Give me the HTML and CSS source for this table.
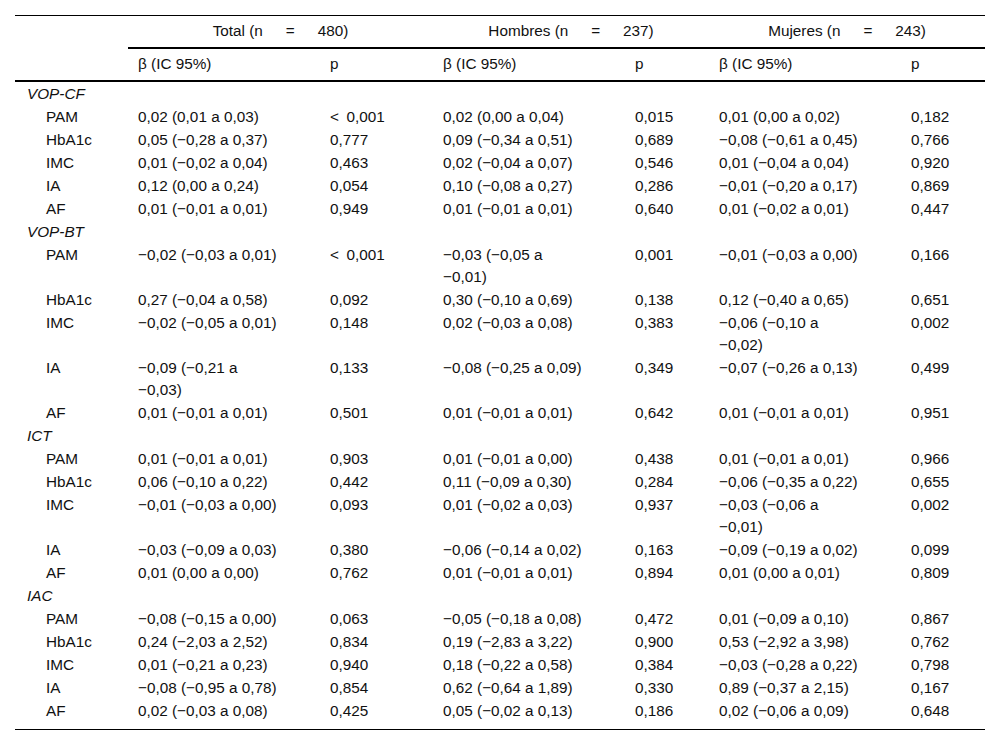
FILE: index.html
```html
<!DOCTYPE html>
<html lang="es">
<head>
<meta charset="utf-8">
<title>Tabla</title>
<link rel="stylesheet" href="styles.css">
</head>
<body>
<div class="wrap">
<table class="data">
<colgroup>
<col class="c-lab"><col class="c-b"><col class="c-p1"><col class="c-b"><col class="c-p"><col class="c-b"><col class="c-p">
</colgroup>
<thead>
<tr class="h1">
<th class="empty"></th>
<th colspan="2" class="grp">Total (n&emsp;&ensp;=&emsp;&ensp;480)</th>
<th colspan="2" class="grp">Hombres (n&emsp;&ensp;=&emsp;&ensp;237)</th>
<th colspan="2" class="grp">Mujeres (n&emsp;&ensp;=&emsp;&ensp;243)</th>
</tr>
<tr class="h2">
<th></th>
<th class="b">β (IC 95%)</th><th>p</th>
<th class="b">β (IC 95%)</th><th>p</th>
<th class="b">β (IC 95%)</th><th>p</th>
</tr>
</thead>
<tbody>
<tr><td colspan="7" class="group">VOP-CF</td></tr>
<tr><td class="lab">PAM</td><td class="b">0,02 (0,01 a 0,03)</td><td>&lt;&ensp;0,001</td><td class="b">0,02 (0,00 a 0,04)</td><td>0,015</td><td class="b">0,01 (0,00 a 0,02)</td><td>0,182</td></tr>
<tr><td class="lab">HbA1c</td><td class="b">0,05 (−0,28 a 0,37)</td><td>0,777</td><td class="b">0,09 (−0,34 a 0,51)</td><td>0,689</td><td class="b">−0,08 (−0,61 a 0,45)</td><td>0,766</td></tr>
<tr><td class="lab">IMC</td><td class="b">0,01 (−0,02 a 0,04)</td><td>0,463</td><td class="b">0,02 (−0,04 a 0,07)</td><td>0,546</td><td class="b">0,01 (−0,04 a 0,04)</td><td>0,920</td></tr>
<tr><td class="lab">IA</td><td class="b">0,12 (0,00 a 0,24)</td><td>0,054</td><td class="b">0,10 (−0,08 a 0,27)</td><td>0,286</td><td class="b">−0,01 (−0,20 a 0,17)</td><td>0,869</td></tr>
<tr><td class="lab">AF</td><td class="b">0,01 (−0,01 a 0,01)</td><td>0,949</td><td class="b">0,01 (−0,01 a 0,01)</td><td>0,640</td><td class="b">0,01 (−0,02 a 0,01)</td><td>0,447</td></tr>
<tr><td colspan="7" class="group">VOP-BT</td></tr>
<tr><td class="lab">PAM</td><td class="b">−0,02 (−0,03 a 0,01)</td><td>&lt;&ensp;0,001</td><td class="b">−0,03 (−0,05 a −0,01)</td><td>0,001</td><td class="b">−0,01 (−0,03 a 0,00)</td><td>0,166</td></tr>
<tr><td class="lab">HbA1c</td><td class="b">0,27 (−0,04 a 0,58)</td><td>0,092</td><td class="b">0,30 (−0,10 a 0,69)</td><td>0,138</td><td class="b">0,12 (−0,40 a 0,65)</td><td>0,651</td></tr>
<tr><td class="lab">IMC</td><td class="b">−0,02 (−0,05 a 0,01)</td><td>0,148</td><td class="b">0,02 (−0,03 a 0,08)</td><td>0,383</td><td class="b">−0,06 (−0,10 a −0,02)</td><td>0,002</td></tr>
<tr><td class="lab">IA</td><td class="b">−0,09 (−0,21 a −0,03)</td><td>0,133</td><td class="b">−0,08 (−0,25 a 0,09)</td><td>0,349</td><td class="b">−0,07 (−0,26 a 0,13)</td><td>0,499</td></tr>
<tr><td class="lab">AF</td><td class="b">0,01 (−0,01 a 0,01)</td><td>0,501</td><td class="b">0,01 (−0,01 a 0,01)</td><td>0,642</td><td class="b">0,01 (−0,01 a 0,01)</td><td>0,951</td></tr>
<tr><td colspan="7" class="group">ICT</td></tr>
<tr><td class="lab">PAM</td><td class="b">0,01 (−0,01 a 0,01)</td><td>0,903</td><td class="b">0,01 (−0,01 a 0,00)</td><td>0,438</td><td class="b">0,01 (−0,01 a 0,01)</td><td>0,966</td></tr>
<tr><td class="lab">HbA1c</td><td class="b">0,06 (−0,10 a 0,22)</td><td>0,442</td><td class="b">0,11 (−0,09 a 0,30)</td><td>0,284</td><td class="b">−0,06 (−0,35 a 0,22)</td><td>0,655</td></tr>
<tr><td class="lab">IMC</td><td class="b">−0,01 (−0,03 a 0,00)</td><td>0,093</td><td class="b">0,01 (−0,02 a 0,03)</td><td>0,937</td><td class="b">−0,03 (−0,06 a −0,01)</td><td>0,002</td></tr>
<tr><td class="lab">IA</td><td class="b">−0,03 (−0,09 a 0,03)</td><td>0,380</td><td class="b">−0,06 (−0,14 a 0,02)</td><td>0,163</td><td class="b">−0,09 (−0,19 a 0,02)</td><td>0,099</td></tr>
<tr><td class="lab">AF</td><td class="b">0,01 (0,00 a 0,00)</td><td>0,762</td><td class="b">0,01 (−0,01 a 0,01)</td><td>0,894</td><td class="b">0,01 (0,00 a 0,01)</td><td>0,809</td></tr>
<tr><td colspan="7" class="group">IAC</td></tr>
<tr><td class="lab">PAM</td><td class="b">−0,08 (−0,15 a 0,00)</td><td>0,063</td><td class="b">−0,05 (−0,18 a 0,08)</td><td>0,472</td><td class="b">0,01 (−0,09 a 0,10)</td><td>0,867</td></tr>
<tr><td class="lab">HbA1c</td><td class="b">0,24 (−2,03 a 2,52)</td><td>0,834</td><td class="b">0,19 (−2,83 a 3,22)</td><td>0,900</td><td class="b">0,53 (−2,92 a 3,98)</td><td>0,762</td></tr>
<tr><td class="lab">IMC</td><td class="b">0,01 (−0,21 a 0,23)</td><td>0,940</td><td class="b">0,18 (−0,22 a 0,58)</td><td>0,384</td><td class="b">−0,03 (−0,28 a 0,22)</td><td>0,798</td></tr>
<tr><td class="lab">IA</td><td class="b">−0,08 (−0,95 a 0,78)</td><td>0,854</td><td class="b">0,62 (−0,64 a 1,89)</td><td>0,330</td><td class="b">0,89 (−0,37 a 2,15)</td><td>0,167</td></tr>
<tr class="last"><td class="lab">AF</td><td class="b">0,02 (−0,03 a 0,08)</td><td>0,425</td><td class="b">0,05 (−0,02 a 0,13)</td><td>0,186</td><td class="b">0,02 (−0,06 a 0,09)</td><td>0,648</td></tr>
</tbody>
</table>
</div>
</body>
</html>
```

FILE: styles.css
```css
html, body {
  margin: 0;
  padding: 0;
  background: #ffffff;
}

.wrap {
  padding: 15px;
}

.data {
  width: 970px;
  table-layout: fixed;
  border-collapse: collapse;
  border-top: 1px solid #000;
  border-bottom: 1px solid #000;
  font-family: "Liberation Sans", Arial, sans-serif;
  font-size: 15.3px;
  line-height: 22px;
  color: #111;
}

.c-lab { width: 113px; }
.c-b { width: 192px; }
.c-p1 { width: 113px; }
.c-p { width: 84px; }

.data th {
  font-weight: normal;
  text-align: left;
  padding: 4px 10px 5px 10px;
  vertical-align: middle;
}

.data .h1 .grp {
  text-align: center;
  border-bottom: 2px solid #000;
}

.data .h2 th {
  border-bottom: 2px solid #000;
}

.data td {
  padding: 1px 10px 0 10px;
  vertical-align: top;
  text-align: left;
}

.data .b {
  padding-right: 40px;
}

.data td.group {
  font-style: italic;
  padding-left: 12px;
}

.data td.lab {
  padding-left: 31px;
}

.data tr.last td {
  padding-bottom: 7px;
}
```
